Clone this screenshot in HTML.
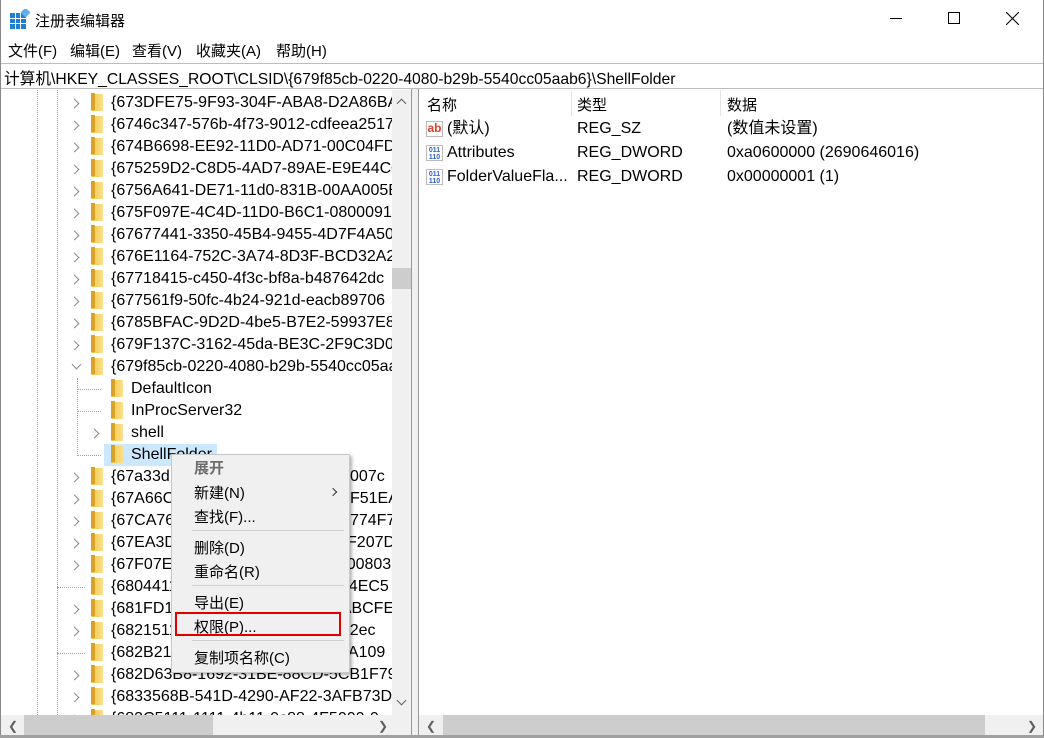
<!DOCTYPE html>
<html><head><meta charset="utf-8"><style>
*{margin:0;padding:0;box-sizing:border-box}
body{width:1044px;height:738px;background:#fff;position:relative;overflow:hidden;font-family:"Liberation Sans","Noto Sans CJK SC",sans-serif;font-size:15px;color:#000}
.a{position:absolute;white-space:nowrap}
.row{position:absolute;height:22px;line-height:22px;white-space:nowrap;font-size:16px}
.fold{position:absolute;width:12px;height:17px;top:3px;background:linear-gradient(90deg,#e8b83a 0,#f5cf5a 30%,#fbe08c 100%);border-radius:1px}
.fold:before{content:"";position:absolute;left:0;top:-1px;width:4px;height:17px;background:#d9a22a}
.chev{position:absolute;width:7px;height:7px;border-right:1.5px solid #8a8a8a;border-bottom:1.5px solid #8a8a8a;transform:rotate(-45deg);top:7px}
.vd{position:absolute;width:0;border-left:1px dotted #a0a0a0}
.hd{position:absolute;height:0;border-top:1px dotted #a0a0a0}
.mi{position:absolute;left:194px;font-size:15px}
.sep{position:absolute;left:192px;width:152px;height:1px;background:#d0d0d0}
.rp{font-size:16px;line-height:20px;height:20px}
</style></head><body>
<svg class="a" style="left:10px;top:9px" width="20" height="20" viewBox="0 0 20 20">
<rect x="0" y="4" width="16" height="16" fill="#1e7fd6"/>
<g stroke="#fff" stroke-width="1"><line x1="0" y1="9.5" x2="16" y2="9.5"/><line x1="0" y1="14.5" x2="16" y2="14.5"/><line x1="5.5" y1="4" x2="5.5" y2="20"/><line x1="10.5" y1="4" x2="10.5" y2="20"/></g>
<rect x="12" y="0" width="7" height="7" fill="#5fb0f0" transform="rotate(45 15.5 3.5)"/>
</svg>
<div class="a" style="left:35px;top:10px;font-size:15px">注册表编辑器</div>
<div class="a" style="left:890px;top:18px;width:12px;height:1px;background:#000"></div>
<div class="a" style="left:948px;top:12px;width:12px;height:12px;border:1px solid #000"></div>
<svg class="a" style="left:1006px;top:12px" width="13" height="13"><path d="M0 0L13 13M13 0L0 13" stroke="#000" stroke-width="1.1"/></svg>
<div class="a" style="left:0;top:0;width:1px;height:738px;background:#888"></div>
<div class="a" style="left:1043px;top:0;width:1px;height:738px;background:#888"></div>
<div class="a" style="left:8px;top:40px">文件(F)</div>
<div class="a" style="left:70px;top:40px">编辑(E)</div>
<div class="a" style="left:132px;top:40px">查看(V)</div>
<div class="a" style="left:196px;top:40px">收藏夹(A)</div>
<div class="a" style="left:276px;top:40px">帮助(H)</div>
<div class="a" style="left:1px;top:63px;width:1042px;height:26px;border-top:1px solid #bcbcbc;border-bottom:1px solid #bcbcbc"></div>
<div class="a" style="left:4px;top:66px;font-size:15.7px">计算机\HKEY_CLASSES_ROOT\CLSID\{679f85cb-0220-4080-b29b-5540cc05aab6}\ShellFolder</div>
<div class="a" style="left:1px;top:90px;width:391px;height:625px;overflow:hidden">
<div class="vd" style="left:36px;top:0;height:625px"></div>
<div class="vd" style="left:56px;top:0;height:625px"></div>
<div class="vd" style="left:76px;top:288px;height:76px"></div>
<div class="hd" style="left:76px;top:299px;width:24px"></div>
<div class="hd" style="left:76px;top:321px;width:24px"></div>
<div class="hd" style="left:76px;top:365px;width:24px"></div>
<div class="hd" style="left:56px;top:497px;width:28px"></div>
<div class="hd" style="left:56px;top:563px;width:28px"></div>
<div class="a" style="left:103px;top:354px;width:113px;height:22px;background:#cce8ff"></div>
</div>
<div class="a" id="tr" style="left:1px;top:90px;width:391px;height:625px;overflow:hidden"></div>
<script>
var L=[["{673DFE75-9F93-304F-ABA8-D2A86BA8",1],["{6746c347-576b-4f73-9012-cdfeea2517",1],["{674B6698-EE92-11D0-AD71-00C04FD8FDFF}",1],["{675259D2-C8D5-4AD7-89AE-E9E44C0",1],["{6756A641-DE71-11d0-831B-00AA005B",1],["{675F097E-4C4D-11D0-B6C1-0800091AA",1],["{67677441-3350-45B4-9455-4D7F4A50",1],["{676E1164-752C-3A74-8D3F-BCD32A2",1],["{67718415-c450-4f3c-bf8a-b487642dc",1],["{677561f9-50fc-4b24-921d-eacb89706",1],["{6785BFAC-9D2D-4be5-B7E2-59937E8F",1],["{679F137C-3162-45da-BE3C-2F9C3D09",1],["{679f85cb-0220-4080-b29b-5540cc05aab6}",2],["DefaultIcon",0,1],["InProcServer32",0,1],["shell",1,1],["ShellFolder",0,1],["{67a33d11-1111-4a3c-9d3e-2f6ad007c",1],["{67A66C11-1111-4B7A-9D31-31AF51EA",1],["{67CA7650-1111-4A11-9C22-9AE774F7",1],["{67EA3D11-1111-4B11-9C33-123F207D",1],["{67F07E11-1111-11D1-AB11-00C00803",1],["{68044111-1111-4A11-9C44-111C4EC5",0],["{681FD111-1111-4A11-9C55-111ABCFE",1],["{68215111-1111-4a11-9c66-1116b2ec",1],["{682B2111-1111-4A11-9C77-1112A109",0],["{682D63B8-1692-31BE-88CD-5CB1F79E",1],["{6833568B-541D-4290-AF22-3AFB73D",1],["{683C5111-1111-4b11-9c88-4F5000-0",1]];
var h="";L.forEach(function(r,i){var y=2+i*22;var c=r[2]?20:0;
if(r[1]==1)h+='<div class="chev" style="left:'+(70+c)+'px;top:'+(y+8)+'px"></div>';
if(r[1]==2)h+='<div class="chev" style="left:72px;top:'+(y+5)+'px;transform:rotate(45deg)"></div>';
h+='<div class="fold" style="left:'+(90+c)+'px;top:'+(y+2)+'px"></div>';
h+='<div class="row" style="left:'+(110+c)+'px;top:'+y+'px">'+r[0]+'</div>';});
document.getElementById('tr').innerHTML=h;
</script>
<div class="a" style="left:392px;top:90px;width:19px;height:625px;background:#f0f0f0"></div>
<div class="a" style="left:392px;top:268px;width:19px;height:21px;background:#cdcdcd"></div>
<div class="a" style="left:398px;top:100px;width:7px;height:7px;border-left:1.5px solid #606060;border-top:1.5px solid #606060;transform:rotate(45deg)"></div>
<div class="a" style="left:398px;top:697px;width:7px;height:7px;border-right:1.5px solid #606060;border-bottom:1.5px solid #606060;transform:rotate(45deg)"></div>
<div class="a" style="left:411px;top:89px;width:1px;height:649px;background:#999"></div>
<div class="a" style="left:412px;top:89px;width:6px;height:649px;background:#f0f0f0"></div>
<div class="a" style="left:418px;top:89px;width:1px;height:649px;background:#999"></div>
<div class="a" style="left:0;top:735px;width:1044px;height:3px;background:#a0a0a0"></div>
<div class="a" style="left:1px;top:715px;width:410px;height:20px;background:#f0f0f0"></div>
<div class="a" style="left:24px;top:715px;width:189px;height:20px;background:#cdcdcd"></div>
<div class="a" style="left:8px;top:719px;font-size:12px;color:#606060">&#10094;</div>
<div class="a" style="left:378px;top:719px;font-size:12px;color:#606060">&#10095;</div>
<div class="a" style="left:419px;top:715px;width:624px;height:20px;background:#f0f0f0"></div>
<div class="a" style="left:443px;top:715px;width:542px;height:20px;background:#cdcdcd"></div>
<div class="a" style="left:426px;top:719px;font-size:12px;color:#606060">&#10094;</div>
<div class="a" style="left:1027px;top:719px;font-size:12px;color:#606060">&#10095;</div>
<div class="a" style="left:427px;top:94px">名称</div>
<div class="a" style="left:571px;top:90px;width:1px;height:26px;background:#e5e5e5"></div>
<div class="a" style="left:577px;top:94px">类型</div>
<div class="a" style="left:720px;top:90px;width:1px;height:26px;background:#e5e5e5"></div>
<div class="a" style="left:727px;top:94px">数据</div>
<div class="a" style="left:426px;top:121px;width:17px;height:16px;border:1px solid #bbb;background:#fff;color:#e0412a;font-weight:bold;font-size:12px;line-height:13px;text-align:center">ab</div>
<div class="a" style="left:426px;top:145px;width:17px;height:16px;border:1px solid #bbb;background:#fff;color:#2a5fd0;font-weight:bold;font-size:7px;line-height:7px;text-align:center;padding-top:1px">011<br>110</div>
<div class="a" style="left:426px;top:169px;width:17px;height:16px;border:1px solid #bbb;background:#fff;color:#2a5fd0;font-weight:bold;font-size:7px;line-height:7px;text-align:center;padding-top:1px">011<br>110</div>
<div class="a rp" style="left:447px;top:119px">(默认)</div>
<div class="a rp" style="left:577px;top:119px">REG_SZ</div>
<div class="a rp" style="left:727px;top:119px">(数值未设置)</div>
<div class="a rp" style="left:447px;top:143px">Attributes</div>
<div class="a rp" style="left:577px;top:143px">REG_DWORD</div>
<div class="a rp" style="left:727px;top:143px">0xa0600000 (2690646016)</div>
<div class="a rp" style="left:447px;top:167px">FolderValueFla...</div>
<div class="a rp" style="left:577px;top:167px">REG_DWORD</div>
<div class="a rp" style="left:727px;top:167px">0x00000001 (1)</div>
<div class="a" style="left:171px;top:454px;width:179px;height:219px;background:#f0f0f0;border:1px solid #c8c8c8;box-shadow:2px 2px 3px rgba(0,0,0,.3)"></div>
<div class="mi" style="top:457px;color:#6d6d6d;font-weight:bold">展开</div>
<div class="mi" style="top:482px">新建(N)</div>
<div class="a" style="left:330px;top:489px;width:6px;height:6px;border-right:1px solid #333;border-top:1px solid #333;transform:rotate(45deg)"></div>
<div class="mi" style="top:506px">查找(F)...</div>
<div class="sep" style="top:530px"></div>
<div class="mi" style="top:537px">删除(D)</div>
<div class="mi" style="top:561px">重命名(R)</div>
<div class="sep" style="top:585px"></div>
<div class="mi" style="top:592px">导出(E)</div>
<div class="mi" style="top:616px">权限(P)...</div>
<div class="sep" style="top:640px"></div>
<div class="mi" style="top:647px">复制项名称(C)</div>
<div class="a" style="left:175px;top:612px;width:166px;height:24px;border:2px solid #e00000"></div>
</body></html>
